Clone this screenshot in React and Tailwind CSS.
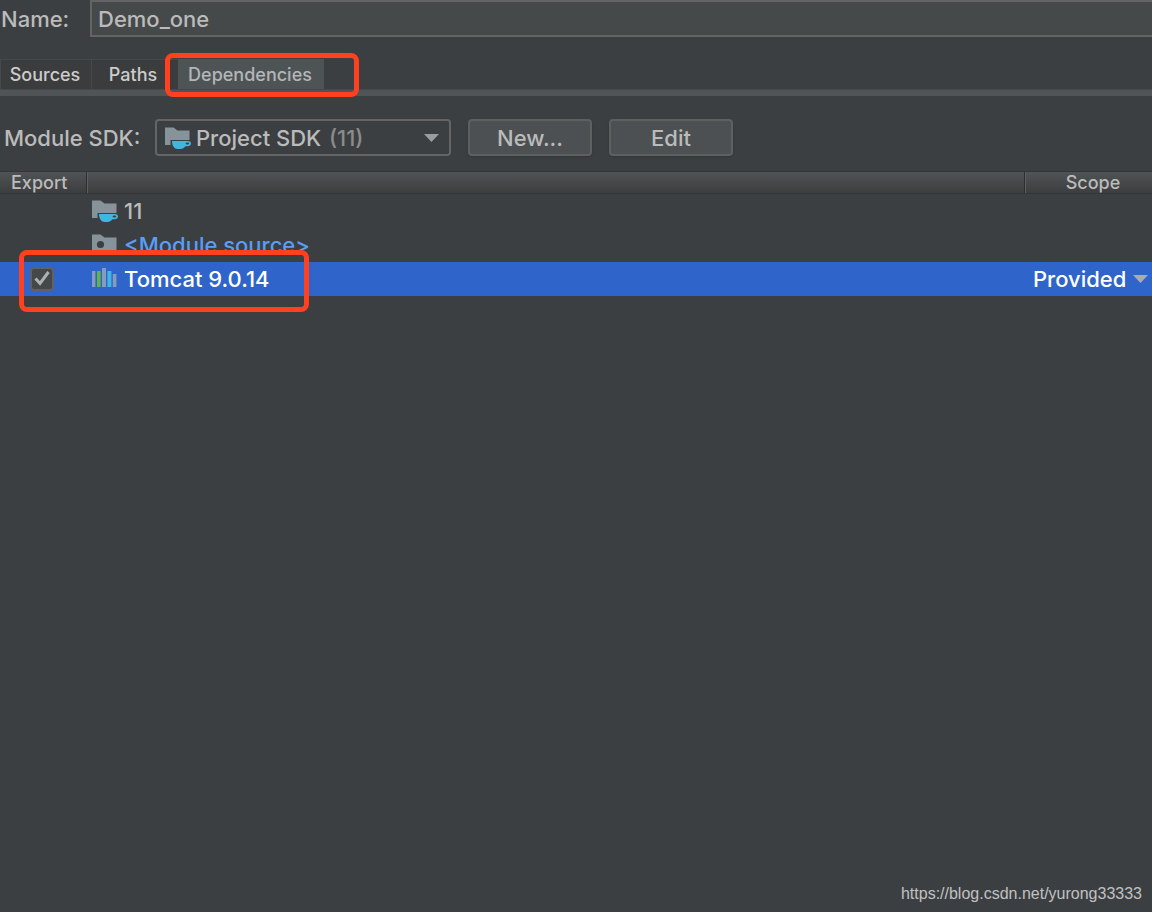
import React from 'react';

function SdkIcon({ className }) {
  return (
    <svg className={className} width="26" height="22" viewBox="0 0 26 22" aria-hidden="true">
      <path d="M0 0.5H8.5L12.5 3.5H24.5V13H5.5V18H0Z" fill="#87939a" />
      <path d="M7 14H21.5C24.5 13.6 26 14.6 26 16.4C26 18.4 24 19.4 20.5 19.3C19.3 20.8 17.5 22 15.5 22H12.5C9.5 22 7 18.8 7 14Z" fill="#40b6e0" />
      <ellipse cx="22.4" cy="16.5" rx="1.8" ry="1" fill="#3c3f41" />
    </svg>
  );
}

function SourceIcon() {
  return (
    <svg width="26" height="22" viewBox="0 0 26 22" aria-hidden="true">
      <path d="M0 0.5H8.5L12.5 3.5H24.5V18H0Z" fill="#87939a" />
      <circle cx="8.5" cy="10.5" r="3.6" fill="#3c3f41" />
    </svg>
  );
}

function LibraryIcon() {
  return (
    <svg width="26" height="22" viewBox="0 0 26 22" aria-hidden="true">
      <rect x="0" y="3" width="3.4" height="16" fill="#889bbd" />
      <rect x="5" y="3" width="3.6" height="16" fill="#62b543" />
      <rect x="10" y="0" width="4" height="19" fill="#889bbd" />
      <rect x="15.4" y="3" width="4" height="16" fill="#40b6e0" />
      <rect x="20.8" y="6" width="3.6" height="13" fill="#889bbd" />
    </svg>
  );
}

function Arrow({ className }) {
  return (
    <svg className={className} width="15" height="8" viewBox="0 0 15 8" aria-hidden="true">
      <path d="M0 0H15L7.5 8Z" fill="currentColor" />
    </svg>
  );
}

function HeaderCell({ children, className = '' }) {
  return (
    <th scope="col" className={`relative h-[23px] border-y border-[#333537] p-0 text-lg leading-5 font-medium ${className}`}>
      {children}
    </th>
  );
}

function Divider() {
  return <span className="absolute inset-y-0 left-0 w-0.5 border-l border-[#2c2e2f] bg-[#5c6062]" />;
}

export default function App() {
  return (
    <div className="relative min-h-screen overflow-hidden bg-[#3c3f41] font-['Inter','Liberation_Sans',sans-serif] text-[22px] leading-6 font-medium text-[#bbbbbb]">
      {/* Module name */}
      <div className="flex h-[37px] items-center">
        <label htmlFor="name" className="w-[90px] shrink-0 pl-px">Name:</label>
        <input
          id="name"
          defaultValue="Demo_one"
          className="h-full min-w-0 flex-1 border-2 border-r-0 border-[#646464] bg-[#45494a] px-1.5 outline-none"
        />
      </div>

      {/* Tabs */}
      <div role="tablist" className="mt-[22px] flex h-[30px] text-lg text-[#cccccc]">
        <button role="tab" aria-selected="false" className="w-[92px] border border-b-0 border-[#46494b] bg-[#3a3c3d] pr-0.5 text-center">
          Sources
        </button>
        <button role="tab" aria-selected="false" className="w-[86px] border-t border-[#46494b] bg-[#3a3c3d] pr-1 text-center">
          Paths
        </button>
        <div className="relative">
          <button role="tab" aria-selected="true" className="h-full w-[146px] border-t border-[#4e5456] bg-[#4e5456] pr-0.5 text-center text-[#b4b6b7]">
            Dependencies
          </button>
          <span className="pointer-events-none absolute -top-1.5 -right-[35px] -bottom-2 -left-[13px] z-10 rounded-lg border-[5px] border-[#ff4120]" />
        </div>
      </div>
      <div className="h-[7px] border-t border-[#46494b] bg-[#505456]" />

      {/* SDK selection */}
      <div className="mt-[23px] flex h-[37px] items-center pl-1">
        <label htmlFor="sdk" className="w-[151px] shrink-0">Module SDK:</label>
        <div className="relative h-full w-[296px]">
          <select
            id="sdk"
            className="h-full w-full appearance-none rounded-sm border-2 border-[#646464] bg-[#3c3f41] pl-[39px] outline-none"
          >
            <option>Project SDK</option>
          </select>
          <SdkIcon className="pointer-events-none absolute top-2 left-2.5" />
          <span className="pointer-events-none absolute inset-y-0 left-[174px] flex items-center text-[#8c8c8c]">(11)</span>
          <Arrow className="pointer-events-none absolute top-[15px] right-3 text-[#9a9da0]" />
        </div>
        <button className="ml-[17px] h-full w-[124px] rounded-sm border-2 border-[#5e6060] bg-[#4c5052] shadow-sm">New...</button>
        <button className="ml-[17px] h-full w-[124px] rounded-sm border-2 border-[#5e6060] bg-[#4c5052] shadow-sm">Edit</button>
      </div>

      {/* Dependencies */}
      <table className="mt-[15px] w-full table-fixed border-separate border-spacing-0">
        <colgroup>
          <col className="w-[86px]" />
          <col />
          <col className="w-[128px]" />
        </colgroup>
        <thead className="bg-linear-to-b from-[#515557] to-[#3b3c3d]">
          <tr>
            <HeaderCell className="pl-[11px] text-left">Export</HeaderCell>
            <HeaderCell><Divider /></HeaderCell>
            <HeaderCell className="pl-2.5"><Divider />Scope</HeaderCell>
          </tr>
        </thead>
        <tbody>
          <tr className="h-[34px]">
            <td />
            <td className="p-0">
              <div className="flex items-center gap-1.5 pl-1.5"><SdkIcon />11</div>
            </td>
            <td />
          </tr>
          <tr className="h-[34px]">
            <td />
            <td className="p-0">
              <div className="flex items-center gap-1.5 pl-1.5 text-[#589df6]"><SourceIcon />&lt;Module source&gt;</div>
            </td>
            <td />
          </tr>
          <tr className="h-[34px] bg-[#2f65ca] text-white">
            <td className="relative p-0 pl-[30px]">
              <div className="relative size-6">
                <input
                  type="checkbox"
                  defaultChecked
                  aria-label="Export Tomcat 9.0.14"
                  className="peer block size-6 appearance-none rounded-sm border-2 border-[#616161] bg-[#43494a]"
                />
                <svg className="pointer-events-none invisible absolute inset-0 peer-checked:visible" width="24" height="24" viewBox="0 0 24 24" aria-hidden="true">
                  <path d="M5.5 11.5L10 16.5L18.5 5" fill="none" stroke="#b0b0b0" strokeWidth="3" />
                </svg>
              </div>
              <span className="pointer-events-none absolute -top-3 left-[19px] z-10 h-[62px] w-[290px] rounded-lg border-[5px] border-[#ff4120]" />
            </td>
            <td className="p-0">
              <div className="flex items-center gap-1.5 pl-1.5"><LibraryIcon />Tomcat 9.0.14</div>
            </td>
            <td className="p-0">
              <div className="relative">
                <select aria-label="Scope" className="block w-full appearance-none bg-transparent pl-[9px] outline-none">
                  <option>Provided</option>
                </select>
                <Arrow className="pointer-events-none absolute top-2 right-1 text-[#a9abad]" />
              </div>
            </td>
          </tr>
        </tbody>
      </table>

      <a
        href="https://blog.csdn.net/yurong33333"
        className="absolute right-2.5 bottom-1.5 font-['Liberation_Sans',sans-serif] text-base font-normal text-[#c0c1c2]"
      >
        https://blog.csdn.net/yurong33333
      </a>
    </div>
  );
}
